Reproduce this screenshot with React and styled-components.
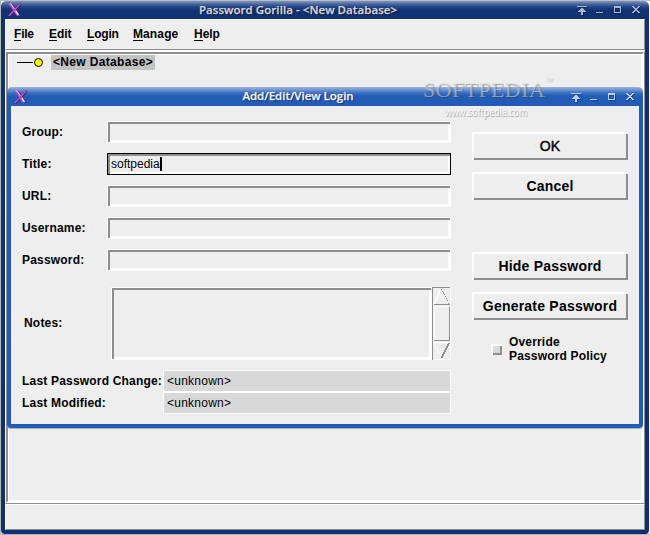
import React from "react";
import styled, { createGlobalStyle } from "styled-components";

const face = "#eeeeee";
const shade = "#8e8e8e";

const GlobalStyle = createGlobalStyle`
  html, body { margin: 0; padding: 0; }
  body {
    width: 650px; height: 535px; overflow: hidden; background: #fff;
    font-family: "Liberation Sans", Arial, sans-serif; font-size: 12px; color: #000;
  }
  * { box-sizing: border-box; }
`;

const Desktop = styled.div`
  position: relative;
  width: 650px;
  height: 535px;
  padding: 1px 1px 1px 1px;
  background: linear-gradient(90deg, #b9b9b9 1px, transparent 1px),
    linear-gradient(#bdbdb8 1px, #fff 1px, #fff 533px, #b4b4b4 534px);
`;

const MainWindow = styled.div`
  display: flex;
  flex-direction: column;
  width: 648px;
  height: 533px;
  padding: 0 4px 4px;
  border-radius: 5px 5px 4px 4px;
  background: linear-gradient(#7f98c4 0, #5b77ae 2px, #3c5a96 4px, #1b3c7c 7px, #113272 10px, #0f3070 100%);
`;

const DialogWindow = styled.div`
  position: absolute;
  left: 7px;
  top: 87px;
  display: flex;
  flex-direction: column;
  width: 636px;
  height: 341px;
  padding: 0 4px 4px;
  border-radius: 5px 5px 4px 4px;
  background: linear-gradient(#a3b5d4 0, #8ba9d8 1px, #6c92d0 3px, #3c6ebf 6px, #235cb6 9px, #205bb8 100%);
  box-shadow: 0 1px 0 #b0b0b0;
`;

const TitleBar = styled.div`
  display: grid;
  grid-template-columns: 70px 1fr 70px;
  align-items: center;
  flex: none;
  height: ${(p) => p.$height}px;
  padding: ${(p) => p.$top || 0}px 3px 0;
`;

const TitleText = styled.div`
  text-align: center;
  font-family: "Open Sans", "Noto Sans", sans-serif;
  font-weight: 600;
  font-size: 11.5px;
  line-height: 16px;
  margin-bottom: ${(p) => p.$lift || 0}px;
  letter-spacing: ${(p) => p.$spacing}px;
  color: ${(p) => p.$color};
  -webkit-text-stroke: 0.25px ${(p) => p.$color};
  text-shadow: 1px 1px 1px rgba(0, 0, 30, 0.65);
  white-space: nowrap;
  transform: translateX(${(p) => p.$shift}px);
`;

const Controls = styled.svg`
  display: block;
  justify-self: end;
  width: 66px;
  height: 12px;
`;

const Logo = styled.svg`
  display: block;
  width: 14px;
  height: 14px;
`;

const MenuBar = styled.div`
  display: flex;
  flex: none;
  width: 640px;
  height: 31px;
  border: 1px solid;
  border-color: #fff ${shade} ${shade} #fff;
  background: ${face};
`;

const MenuItem = styled.div`
  width: ${(p) => p.$width}px;
  margin-left: ${(p) => p.$gap || 0}px;
  font-weight: bold;
  line-height: 14px;
  padding-top: 7px;
  letter-spacing: ${(p) => p.$spacing || 0}px;
`;

const Mnemonic = styled.span`
  border-bottom: 1px solid #000;
  display: inline-block;
  height: 14px;
  letter-spacing: 0;
`;

const TreeFrame = styled.div`
  flex: none;
  height: 454px;
  border: solid;
  border-width: 2px 1px 1px 1px;
  border-color: #fff ${shade} ${shade} #fff;
`;

const TreePane = styled.div`
  height: 451px;
  border: solid;
  border-width: 2px 2px 2px 2px;
  border-color: ${shade} #fff #fff ${shade};
  box-shadow: inset 1px 1px 0 #fff, inset -1px -1px 0 #fff;
  background: ${face};
`;

const TreeNode = styled.div`
  display: flex;
  align-items: center;
  padding: 1px 0 0 9px;
`;

const NodeGlyph = styled.svg`
  display: block;
  width: 34px;
  height: 15px;
`;

const NodeLabel = styled.span`
  height: 15px;
  width: 104px;
  padding-left: 2px;
  line-height: 14px;
  font-weight: bold;
  letter-spacing: 0.34px;
  white-space: nowrap;
  background: #c3c3c3;
`;

const StatusBar = styled.div`
  height: 26px;
  border: 1px solid;
  border-color: #fff ${shade} ${shade} #fff;
  background: ${face};
`;

const DialogBody = styled.div`
  display: grid;
  grid-template-columns: 440px 156px;
  column-gap: 21px;
  width: 628px;
  height: 318px;
  padding-top: 15px;
  background: ${face};
`;

const Form = styled.div`
  display: flex;
  flex-direction: column;
`;

const FieldRow = styled.label`
  display: grid;
  grid-template-columns: 96px 344px;
  height: 22px;
  margin-bottom: 10px;
  line-height: 23px;
`;

const FieldLabel = styled.span`
  padding-left: ${(p) => p.$inset || 11}px;
  font-weight: bold;
  letter-spacing: 0.19px;
  white-space: nowrap;
`;

const Entry = styled.span`
  display: flex;
  align-items: center;
  height: 22px;
  padding-left: 1px;
  border: 1px solid ${(p) => (p.$focused ? "#000" : "#fff")};
  background: ${face};
  box-shadow: inset 2px 2px 0 ${shade}, inset -2px -2px 0 #fff;
`;

const EntryText = styled.span`
  height: 14px;
  margin-left: 2px;
  line-height: 14px;
  border-right: 2px solid #000;
`;

const NotesRow = styled.div`
  display: grid;
  grid-template-columns: 100px 321px 19px;
  height: 73px;
  margin: 6px 0 10px;
  line-height: 73px;
`;

const NotesArea = styled.div`
  border: 1px solid #fff;
  background: ${face};
  box-shadow: inset 2px 2px 0 ${shade}, inset -2px -2px 0 #fff;
`;

const ScrollBar = styled.svg`
  display: block;
  width: 19px;
  height: 73px;
`;

const InfoRow = styled.div`
  display: grid;
  grid-template-columns: 152px 288px;
  height: 22px;
  line-height: 22px;
`;

const InfoValue = styled.span`
  padding-left: 3px;
  border: 1px solid #fff;
  line-height: 20px;
  letter-spacing: 0.25px;
  background: #d8d8d8;
`;

const Actions = styled.div`
  display: flex;
  flex-direction: column;
  padding-top: 11px;
`;

const Button = styled.button`
  display: block;
  flex: none;
  width: 156px;
  height: 28px;
  margin: 0 0 ${(p) => p.$after || 12}px;
  padding: 0 0 1px;
  border: 0;
  background: ${face};
  box-shadow: inset 2px 2px 0 #fff, inset -2px -2px 0 ${shade};
  font-family: inherit;
  font-size: 14px;
  font-weight: ${(p) => (p.$light ? 400 : 700)};
  -webkit-text-stroke: ${(p) => (p.$light ? "0.4px #000" : "0")};
  letter-spacing: 0.22px;
  white-space: nowrap;
  color: #000;
`;

const CheckRow = styled.div`
  display: flex;
  align-items: center;
  gap: 7px;
  padding-left: 19px;
  margin-top: 3px;
`;

const CheckBox = styled.span`
  width: 11px;
  height: 11px;
  background: #d9d9d9;
  box-shadow: inset 2px 2px 0 #fff, inset -2px -2px 0 ${shade};
`;

const CheckLabel = styled.span`
  font-weight: bold;
  line-height: 14px;
  letter-spacing: 0.17px;
`;

const Watermark = styled.div`
  position: absolute;
  left: 423px;
  top: 76px;
  width: 136px;
  pointer-events: none;
`;

const MarkName = styled.div`
  display: flex;
  font-family: "Liberation Serif", serif;
  font-size: 22px;
  line-height: 28px;
  letter-spacing: 0.4px;
  color: rgba(225, 228, 232, 0.5);
  text-shadow: 1px 1px 1px rgba(60, 60, 60, 0.45);
`;

const MarkSign = styled.span`
  font-size: 8px;
  line-height: 10px;
  opacity: 0.6;
`;

const MarkSite = styled.div`
  margin: 0 0 0 22px;
  font-family: "Open Sans", "Noto Sans", sans-serif;
  font-size: 11px;
  line-height: 16px;
  white-space: nowrap;
  transform: scaleX(0.81);
  transform-origin: left;
  color: #fafafa;
  text-shadow: 1px 1px 1px rgba(90, 90, 90, 0.6);
`;

function XLogo() {
  return (
    <Logo viewBox="0 0 14 14">
      <path d="M1 1h3.800l8 12H9z" fill="#4a1b68" />
      <path d="M12.800.8 1.300 13.400" stroke="#4a1b68" strokeWidth="2.400" />
      <path d="M12.400.6 1 12.800" stroke="#c85bd6" strokeWidth="1.300" />
      <path d="M.5.5h3.400l7.800 12H8.400z" fill="#b94fcb" />
      <path d="M1.500 1H3l3.200 4.800" fill="none" stroke="#f1b9f2" />
      <path d="m7.800 8 2.500 4" stroke="#f3dcf6" strokeWidth="1.500" />
    </Logo>
  );
}

function WindowControls({ color }) {
  return (
    <Controls viewBox="0 0 66 12" shapeRendering="crispEdges">
      {[["#000", 1, 0.25], [color, 0, 1]].map(([fill, shift, opacity]) => (
        <g key={shift} fill={fill} opacity={opacity} transform={`translate(${shift} ${shift})`}>
          <path d="M1 2h10v1H1zM5 4h2v1h1v1h1v1h1v1H7v3H5V8H2V7h1V6h1V5h1z" />
          <path d="M20 8h7v1h-7z" />
          <path fillRule="evenodd" d="M38 2h7v7h-7zM39 4v4h5V4z" />
          <path d="M56 2h2v1h1v1h2V3h1V2h2v1h-1v1h-1v1h-1v1h1v1h1v1h1v1h-2V8h-1V7h-2v1h-1v1h-2V8h1V7h1V6h1V5h-1V4h-1V3h-1z" />
        </g>
      ))}
    </Controls>
  );
}

function NotesScroll() {
  return (
    <ScrollBar viewBox="0 0 19 73" shapeRendering="crispEdges">
      <path d="M0 0h19v73H0z" fill={face} />
      <path d="M.5 73V.5H18" fill="none" stroke={shade} />
      <path d="M18.500 1v71.500H1" fill="none" stroke="#fff" />
      <path d="M9 2 2 17" stroke="#fff" strokeWidth="2" />
      <path d="M9.500 2 17 17" stroke={shade} strokeDasharray="1 1" />
      <path d="M2 17.500h16" stroke={shade} />
      <path d="M2 53V19.500h15" fill="none" stroke="#fff" />
      <path d="M17.500 20v33.500H2" fill="none" stroke={shade} />
      <path d="M2 55.500h15" stroke="#fff" />
      <path d="M2 56 9.500 71" stroke="#fff" strokeDasharray="2 1" />
      <path d="M17 56 9.500 71" stroke={shade} strokeWidth="1.500" />
    </ScrollBar>
  );
}

const menus = [
  { label: "File", width: 35, gap: 8, spacing: -0.4 },
  { label: "Edit", width: 38, spacing: -0.1 },
  { label: "Login", width: 46, spacing: -0.3 },
  { label: "Manage", width: 61, spacing: 0.15 },
  { label: "Help", width: 40, spacing: -0.1 },
];

const fields = [
  { label: "Group:" },
  { label: "Title:", value: "softpedia" },
  { label: "URL:" },
  { label: "Username:" },
  { label: "Password:" },
];

export default function App() {
  return (
    <Desktop>
      <GlobalStyle />
      <MainWindow>
        <TitleBar $height={18}>
          <XLogo />
          <TitleText $color="#d5d5d5" $spacing={0.06} $shift={-27} $lift={1}>
            Password Gorilla - &lt;New Database&gt;
          </TitleText>
          <WindowControls color="#a9b6d1" />
        </TitleBar>
        <MenuBar>
          {menus.map((m) => (
            <MenuItem key={m.label} $width={m.width} $gap={m.gap} $spacing={m.spacing}>
              <Mnemonic>{m.label[0]}</Mnemonic>
              {m.label.slice(1)}
            </MenuItem>
          ))}
        </MenuBar>
        <TreeFrame>
          <TreePane>
            <TreeNode>
              <NodeGlyph viewBox="0 0 34 15">
                <path d="M0 7.500h16" stroke="#000" />
                <circle cx="21.500" cy="7.500" r="4" fill="#ffff00" stroke="#000" />
              </NodeGlyph>
              <NodeLabel>&lt;New Database&gt;</NodeLabel>
            </TreeNode>
          </TreePane>
        </TreeFrame>
        <StatusBar />
      </MainWindow>

      <DialogWindow>
        <TitleBar $height={19} $top={1}>
          <XLogo />
          <TitleText $color="#f4f4f4" $spacing={-0.03} $shift={-27} $lift={2}>
            Add/Edit/View Login
          </TitleText>
          <WindowControls color="#b9d0f2" />
        </TitleBar>
        <DialogBody>
          <Form>
            {fields.map((f) => (
              <FieldRow key={f.label}>
                <FieldLabel>{f.label}</FieldLabel>
                <Entry $focused={Boolean(f.value)}>
                  {f.value && <EntryText>{f.value}</EntryText>}
                </Entry>
              </FieldRow>
            ))}
            <NotesRow>
              <FieldLabel $inset={13}>Notes:</FieldLabel>
              <NotesArea />
              <NotesScroll />
            </NotesRow>
            <InfoRow>
              <FieldLabel>Last Password Change:</FieldLabel>
              <InfoValue>&lt;unknown&gt;</InfoValue>
            </InfoRow>
            <InfoRow>
              <FieldLabel>Last Modified:</FieldLabel>
              <InfoValue>&lt;unknown&gt;</InfoValue>
            </InfoRow>
          </Form>
          <Actions>
            <Button $light>OK</Button>
            <Button $after={52}>Cancel</Button>
            <Button>Hide Password</Button>
            <Button>Generate Password</Button>
            <CheckRow>
              <CheckBox />
              <CheckLabel>
                Override
                <br />
                Password Policy
              </CheckLabel>
            </CheckRow>
          </Actions>
        </DialogBody>
      </DialogWindow>

      <Watermark>
        <MarkName>
          SOFTPEDIA<MarkSign>™</MarkSign>
        </MarkName>
        <MarkSite>www.softpedia.com</MarkSite>
      </Watermark>
    </Desktop>
  );
}
